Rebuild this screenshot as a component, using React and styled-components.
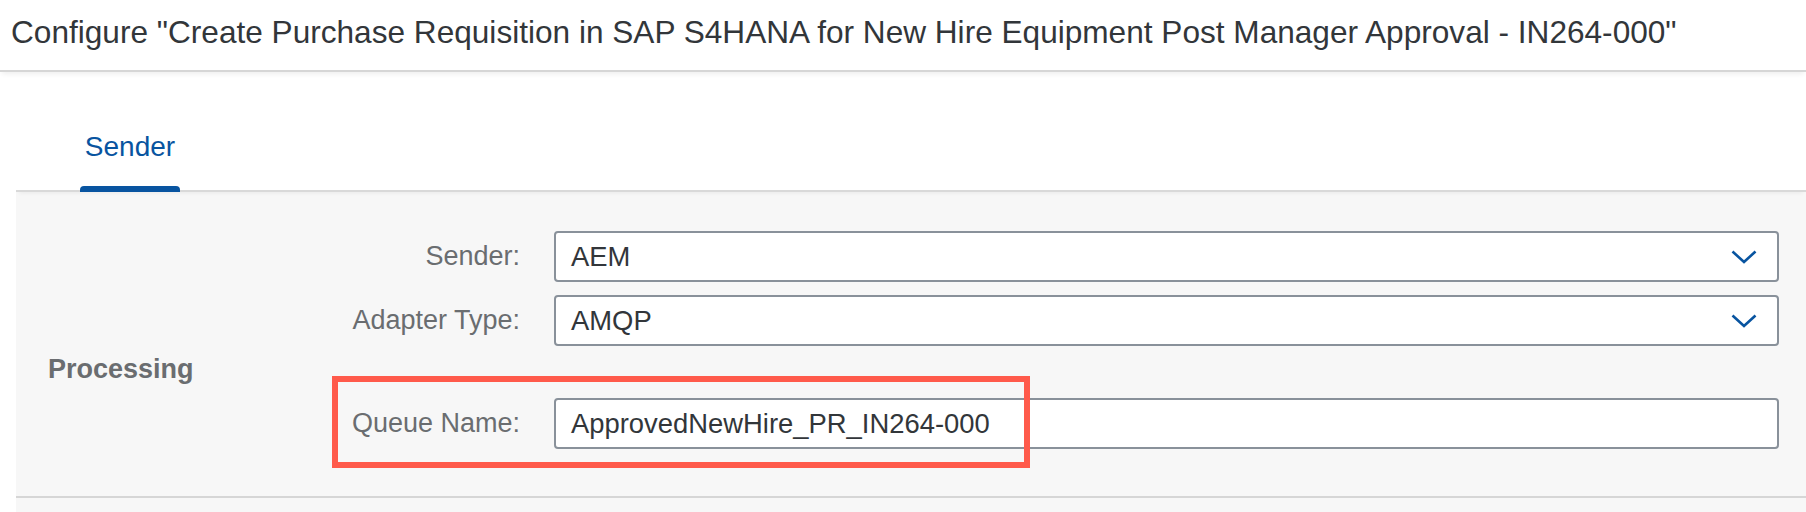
import styled, { createGlobalStyle } from 'styled-components';

const GlobalStyle = createGlobalStyle`
    html, body {
        margin: 0;
        padding: 0;
        background: #ffffff;
    }
    body {
        font-family: "Liberation Sans", Arial, sans-serif;
        color: #32363a;
    }
`;

const Page = styled.div`
    width: 1806px;
    height: 512px;
    overflow: hidden;
    background: #ffffff;
`;

const Header = styled.header`
    height: 72px;
    box-sizing: border-box;
    padding: 14px 0 0 11px;
    border-bottom: 2px solid #d6d6d6;
    box-shadow: 0 4px 5px -2px rgba(0, 0, 0, 0.07);
    position: relative;
    z-index: 1;
`;

const Title = styled.h1`
    margin: 0;
    font-size: 31.6px;
    line-height: 36px;
    font-weight: normal;
    color: #32363a;
    white-space: nowrap;
`;

const Body = styled.div`
    padding: 48px 0 0 16px;
`;

const TabBar = styled.div`
    display: flex;
    height: 72px;
    box-sizing: border-box;
    padding-left: 64px;
    border-bottom: 2px solid #d9d9d9;
    box-shadow: 0 4px 4px -3px rgba(0, 0, 0, 0.06);
    position: relative;
    z-index: 1;
`;

const Tab = styled.div`
    width: 100px;
    display: flex;
    justify-content: center;
    padding-top: 11px;
    box-sizing: border-box;
    font-size: 28px;
    line-height: 32px;
    color: ${(p) => (p.$active ? '#0854a0' : '#32363a')};
    position: relative;

    &::after {
        content: '';
        display: ${(p) => (p.$active ? 'block' : 'none')};
        position: absolute;
        left: 0;
        right: 0;
        bottom: -2px;
        height: 6px;
        background: #0854a0;
        border-radius: 4px 4px 0 0;
    }
`;

const Section = styled.section`
    display: flex;
    background: #f7f7f7;
    padding: 39px 27px 47px 32px;
    border-bottom: 2px solid #d6d6d6;
`;

const GroupTitle = styled.div`
    width: 200px;
    flex: 0 0 auto;
    padding-top: 122px;
    font-size: 27px;
    line-height: 32px;
    font-weight: bold;
    color: #6a6d70;
`;

const Form = styled.div`
    flex: 1;
    display: flex;
    flex-direction: column;
`;

const Row = styled.div`
    display: grid;
    grid-template-columns: 306px 1fr;
    align-items: center;
    margin-top: ${(p) => p.$gap || 0}px;
    position: relative;
`;

const Label = styled.label`
    text-align: right;
    padding-right: 34px;
    font-size: 27px;
    color: #6a6d70;
`;

const Field = styled.div`
    height: 51px;
    box-sizing: border-box;
    display: flex;
    align-items: center;
    justify-content: space-between;
    padding: 0 20px 0 15px;
    background: #ffffff;
    border: 2px solid #89919a;
    border-radius: 4px;
    font-size: 27.4px;
    color: #32363a;
`;

const Highlight = styled.div`
    position: absolute;
    left: 84px;
    top: -22px;
    width: 698px;
    height: 92px;
    box-sizing: border-box;
    border: 6px solid #ff5a4b;
    pointer-events: none;
`;

const Footer = styled.div`
    height: 20px;
    background: #f7f7f7;
`;

const Chevron = () => (
    <svg width="26" height="14" viewBox="0 0 26 14">
        <polyline points="1.5,1.5 13,12 24.5,1.5" fill="none" stroke="#0854a0" strokeWidth="2.6" />
    </svg>
);

const App = () => {
    return (
        <>
            <GlobalStyle />
            <Page>
                <Header>
                    <Title>Configure "Create Purchase Requisition in SAP S4HANA for New Hire Equipment Post Manager Approval - IN264-000"</Title>
                </Header>
                <Body>
                    <TabBar>
                        <Tab $active>Sender</Tab>
                    </TabBar>
                    <Section>
                        <GroupTitle>Processing</GroupTitle>
                        <Form>
                            <Row>
                                <Label>Sender:</Label>
                                <Field>
                                    AEM
                                    <Chevron />
                                </Field>
                            </Row>
                            <Row $gap={13}>
                                <Label>Adapter Type:</Label>
                                <Field>
                                    AMQP
                                    <Chevron />
                                </Field>
                            </Row>
                            <Row $gap={52}>
                                <Label>Queue Name:</Label>
                                <Field>ApprovedNewHire_PR_IN264-000</Field>
                                <Highlight />
                            </Row>
                        </Form>
                    </Section>
                    <Footer />
                </Body>
            </Page>
        </>
    )
}

export default App;
